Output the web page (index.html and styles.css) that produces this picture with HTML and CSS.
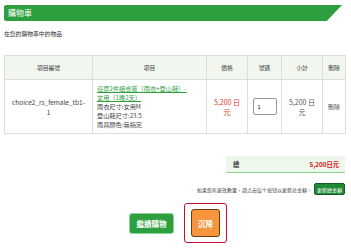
FILE: index.html
```html
<!DOCTYPE html>
<html>
<head>
<meta charset="utf-8">
<link rel="stylesheet" href="styles.css">
</head>
<body>
<div class="page">
  <div class="title-bar"><span class="title">購物車</span></div>
  <p class="intro">在您的購物車中的物品</p>
  <table class="cart">
    <colgroup>
      <col class="c1"><col class="c2"><col class="c3"><col class="c4"><col class="c5"><col class="c6">
    </colgroup>
    <thead>
      <tr><th>項目編號</th><th>項目</th><th>價格</th><th>號碼</th><th>小計</th><th>刪除</th></tr>
    </thead>
    <tbody>
      <tr>
        <td class="center code">choice2_rs_female_tb1-1</td>
        <td class="item"><a href="#">任意2件組合裝（雨衣+登山鞋）- <span class="nowrap">女用（1晚2天）</span></a><br>雨衣尺寸:女用M<br>登山鞋尺寸:23.5<br>雨具顏色:無指定</td>
        <td class="center price">5,200 日元</td>
        <td class="center"><input class="qty" type="text" value="1"></td>
        <td class="center sub">5,200 日元</td>
        <td class="center del">刪除</td>
      </tr>
    </tbody>
  </table>
  <div class="total-row">
    <div class="total"><span class="t-label">總</span><span class="t-val">5,200日元</span></div>
  </div>
  <div class="note-row">
    <span class="note">如果您有更改數量，請点击這个按钮以更新总金額。</span>
    <span class="upd">更新總金額</span>
  </div>
  <div class="actions">
    <span class="btn-green">繼續購物</span>
    <span class="outline"><span class="btn-orange">沉降</span></span>
  </div>
</div>
</body>
</html>
```

FILE: styles.css
```css
* { box-sizing: border-box; }
html, body { margin: 0; padding: 0; background: #fff; }
body {
  font-family: "Noto Sans CJK TC", "Noto Sans", sans-serif;
  color: #333;
  width: 351px;
  height: 252px;
  overflow: hidden;
}
.page { padding: 5px 6px 0 4px; }
.title-bar {
  height: 16px;
  width: 338px;
  background: #2e9f3e;
  clip-path: polygon(0 0, 100% 0, 95.5% 100%, 0 100%);
  border-radius: 2px 0 0 2px;
  display: flex;
  align-items: center;
  padding-left: 4px;
}
.title { color: #fff; font-size: 8px; line-height: 1; }
.intro { margin: 9px 0 0; font-size: 5.8px; line-height: 8px; color: #333; }
.cart {
  margin-top: 17px;
  width: 341px;
  border-collapse: collapse;
  table-layout: fixed;
  color: #444;
}
.c1 { width: 88px; } .c2 { width: 114px; } .c3 { width: 41px; }
.c4 { width: 34px; } .c5 { width: 41px; } .c6 { width: 23px; }
.cart th, .cart td { border: 1px solid #ddd; }
.cart th { background: #f1f7ef; height: 24px; font-weight: normal; text-align: center; font-size: 5.8px; }
.cart td { height: 54px; padding: 2px 4px; vertical-align: middle; font-size: 6px; line-height: 9px; }
.center { text-align: center; }
.code { font-size: 6.5px !important; line-height: 10px !important; padding: 2px 7px !important; }
.item { text-align: left; font-size: 6.2px !important; line-height: 9px !important; }
.item a { color: #2e9f3e; }
.nowrap { white-space: nowrap; }
.price { color: #e2382c; font-size: 7px !important; line-height: 10px !important; }
.sub { color: #555; font-size: 7px !important; line-height: 10px !important; }
.del { color: #555; padding: 0 !important; }
.qty {
  width: 24px; height: 17px; font-size: 5.5px; border: 1px solid #999;
  border-radius: 2px; padding: 0 4px; font-family: inherit;
}
.total-row { display: flex; justify-content: flex-end; margin-top: 22px; }
.total {
  width: 119px; height: 17px; background: #eef7ec; border-bottom: 1px solid #8fd08f;
  display: flex; justify-content: space-between; align-items: center; padding: 0 6px 0 7px;
  font-size: 6.3px; font-weight: bold;
}
.t-label { color: #333; }
.t-val { color: #d8141c; }
.note-row { display: flex; justify-content: flex-end; align-items: center; margin-top: 10px; gap: 2px; }
.note { font-size: 5px; color: #444; }
.upd {
  background: #1f8a35; color: #fff; font-size: 5px; border: 1px solid #135d22; border-radius: 2px;
  padding: 1px 2px; height: 12px; display: flex; align-items: center;
}
.actions { display: flex; justify-content: center; align-items: center; gap: 10px; margin-top: 8px; padding-left: 7px; }
.btn-green {
  width: 45px; height: 21px; background: #2e9f3e; border: 1px solid #8ed09a; border-radius: 3px;
  color: #fff; font-size: 7.5px; font-weight: bold; display: flex; align-items: center; justify-content: center;
}
.outline {
  width: 43px; height: 40px; border: 1px solid #c8102e; border-radius: 3px;
  display: flex; align-items: center; justify-content: center;
}
.btn-orange {
  width: 29px; height: 28px; background: #f7953c; border: 1px solid #6b3a12; border-radius: 3px;
  color: #fff; font-size: 7.5px; font-weight: bold; display: flex; align-items: center; justify-content: center;
}
```
